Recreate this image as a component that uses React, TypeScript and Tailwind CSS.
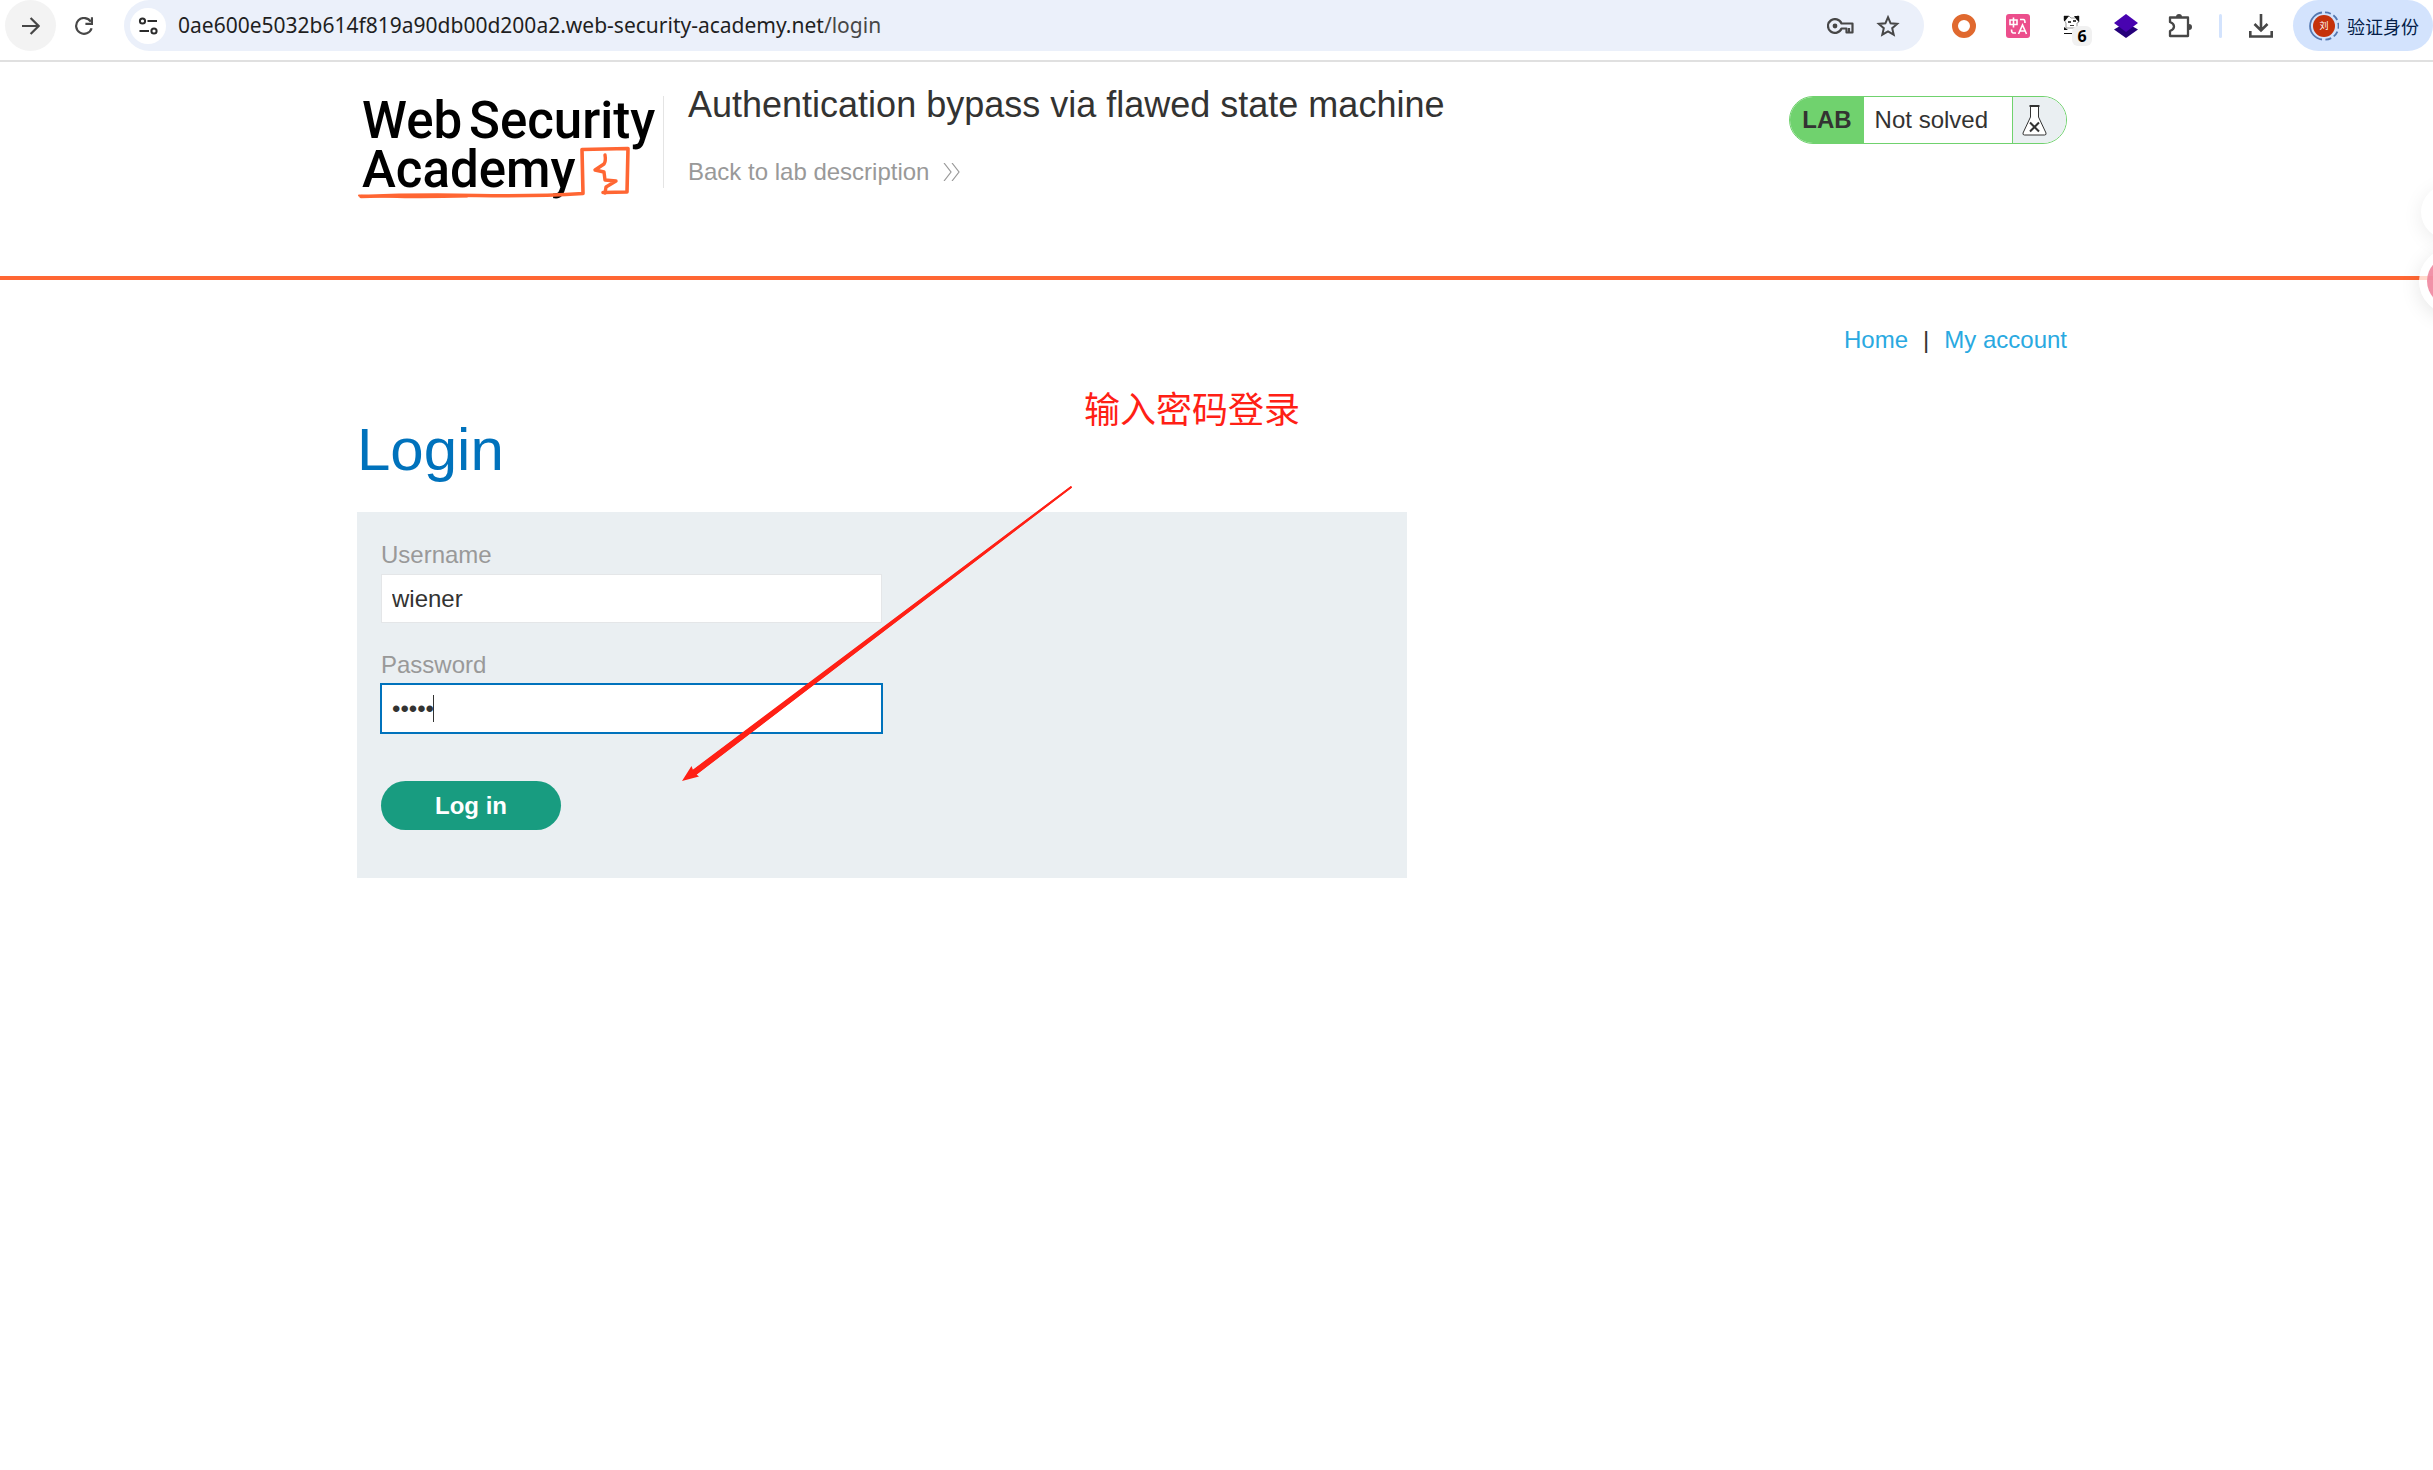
import type { ReactNode } from 'react';

const host = '0ae600e5032b614f819a90db00d200a2.web-security-academy.net';

export default function App() {
  return (
    <div className="relative min-h-screen overflow-hidden bg-white font-['Liberation_Sans',Arial,sans-serif] text-2xl leading-7 text-[#333332]">
      <BrowserBar />
      <LabHeader />
      <div className="pr-[9px]">
        <main className="relative mx-auto max-w-[1710px] pt-[46px]">
          <nav className="flex justify-end gap-[15px]">
            <a href="#home" className="text-[#29a9e1]">Home</a>
            <span>|</span>
            <a href="#account" className="text-[#29a9e1]">My account</a>
          </nav>
          <h1 className="mt-16 text-[60px] leading-[64px] text-[#0072bc]">Login</h1>
          <LoginForm />
          <Annotation />
        </main>
      </div>
      <FloatingButtons />
    </div>
  );
}

function BrowserBar() {
  return (
    <div className="h-[62px] border-b-2 border-[#e0e0e0]">
      <div className="flex h-[51px] items-center pl-[5px]">
        <button aria-label="Forward" className="grid size-[51px] shrink-0 place-items-center rounded-full bg-[#f3f3f3]">
          <svg viewBox="0 0 18 18" className="size-[18px]" fill="none" stroke="#474747" strokeWidth="2.2">
            <path d="M0 9h16.4M8.6 1l8 8-8 8" />
          </svg>
        </button>
        <button aria-label="Reload" className="ml-[19px] grid size-[18px] shrink-0 place-items-center">
          <svg viewBox="0 0 18 18" className="size-[18px]" fill="none" stroke="#474747" strokeWidth="2.2">
            <path d="M16.6 11.2A7.9 7.9 0 1 1 15.8 4.8" />
            <path d="M17 .2v6.7h-6.6" />
          </svg>
        </button>

        <div className="ml-[31px] flex h-[51px] min-w-0 flex-1 items-center rounded-full bg-[#ebf0fa] pr-6 pl-1.5">
          <button aria-label="Site information" className="grid size-9 shrink-0 place-items-center rounded-full bg-white">
            <svg viewBox="0 0 20 18" className="h-[18px] w-5" fill="none" stroke="#2b2b2b" strokeWidth="2">
              <circle cx="4.5" cy="4" r="2.6" />
              <circle cx="16" cy="14" r="2.6" />
              <path d="M9.5 4H19M1.5 14H11" />
            </svg>
          </button>
          <div className="ml-3 flex-1 pb-0.5 font-['Noto_Sans',sans-serif] text-[21px] text-[#1f1f1f]">
            {host}<span className="text-[#474747]">/login</span>
          </div>
          <button aria-label="Passwords" className="mr-[22px]">
            <svg viewBox="0 0 27 16" className="h-4 w-[27px]" fill="none" stroke="#474747" strokeWidth="2.2">
              <path d="M14.5 5.5A7 6.9 0 1 0 14.5 10.5H19.500V14.500H25.500V5.500Z" strokeLinejoin="round" />
              <circle cx="8" cy="8" r="2.400" fill="#474747" stroke="none" />
              <path d="M22 14v-4" />
            </svg>
          </button>
          <button aria-label="Bookmark this tab">
            <svg viewBox="0 0 24 24" className="h-6 w-6" fill="none" stroke="#474747" strokeWidth="2">
              <path d="M12 3.200l2.600 6.100 6.600.600-5 4.300 1.500 6.500-5.700-3.400-5.700 3.400 1.500-6.500-5-4.300 6.600-.600z" />
            </svg>
          </button>
        </div>

        <div className="ml-7 flex shrink-0 items-center gap-[30px]">
          <Extension label="Proxy switch">
            <circle cx="12" cy="12" r="9" fill="#fff" stroke="#e0692f" strokeWidth="6" />
          </Extension>
          <Extension label="Translate">
            <rect width="24" height="24" rx="3" fill="#ec4e8c" />
            <g fill="none" stroke="#fff" strokeWidth="1.600">
              <path d="M4 6h7v4.500H4zM7.500 3.500v10M14 5.500h3.500q1.500 0 1.500 3.500M5.500 15.500q0 3.500 2 3.500H10" />
              <path d="M12.500 20l4-9 4 9M14 17h5" />
            </g>
          </Extension>
          <span className="relative">
            <Extension label="Panda">
              <path d="M4 2h5l2 2h4l2-2h2v6l-2 1v5H6V9L4 6z" fill="#fff" stroke="#999" strokeWidth="1" />
              <path d="M4 2h5L5 7H4zM14 2h5v6l-3-3zM4 13l4 3H4zM4 19h8v1H4z" fill="#111" />
              <path d="M8 7h3v2H8zM13 6h3v2h-3zM10 11h4v1h-4z" fill="#444" />
            </Extension>
            <span className="absolute top-3 left-3 grid size-5 place-items-center rounded-md bg-[#f1f1f1] font-['Noto_Sans',sans-serif] text-base leading-5 font-bold text-black">6</span>
          </span>
          <Extension label="Layers">
            <path d="M0 15.500l12-7 12 7-12 8.500z" fill="#25007a" />
            <path d="M0 9l12-9 12 9-12 9z" fill="#4803b0" />
          </Extension>
          <Extension label="Extensions">
            <path d="M2 3.500h18v18.500H2v-5q4-1.500 4-4.500t-4-4.500z" fill="none" stroke="#474747" strokeWidth="2.300" strokeLinejoin="round" />
            <path d="M8 3a3 3 0 0 1 6 0zM21 10a3 3 0 0 1 0 6z" fill="#474747" />
          </Extension>
        </div>
        <span className="ml-[27px] h-6 w-[3px] shrink-0 rounded-full bg-[#d3e3fd]" />
        <button aria-label="Downloads" className="ml-[27px] shrink-0">
          <svg viewBox="0 0 24 24" className="size-6" fill="none" stroke="#474747" strokeWidth="2.600">
            <path d="M12 0v16M5.500 10l6.500 6.500L18.500 10M1.300 17v5.500h21.400V17" />
          </svg>
        </button>
        <button className="ml-5 flex h-[51px] w-[140px] shrink-0 items-center gap-2 rounded-full bg-[#d3e3fd] pl-4 text-lg text-[#041e49]">
          <span className="relative grid size-[30px] shrink-0 place-items-center">
            <svg viewBox="0 0 30 30" className="absolute inset-0 size-[30px]" fill="none">
              <path d="M13 1.500A13.600 13.600 0 0 0 13 28.500" stroke="#5478b0" strokeWidth="1.800" />
              <path d="M16 1.400A13.600 13.600 0 0 1 16 28.600" stroke="#5478b0" strokeWidth="1.800" strokeDasharray="6 3" />
              <circle cx="15" cy="15" r="11" fill="#c5320b" />
            </svg>
            <span className="relative font-['Noto_Sans_CJK_SC',sans-serif] text-[9px] leading-3 text-white">刘</span>
          </span>
          <span className="font-['Noto_Sans_CJK_SC',sans-serif] whitespace-nowrap">验证身份</span>
        </button>
      </div>
    </div>
  );
}

function Extension({ label, children }: { label: string; children: ReactNode }) {
  return (
    <button aria-label={label} className="block size-6">
      <svg viewBox="0 0 24 24" className="size-6">{children}</svg>
    </button>
  );
}

function LabHeader() {
  return (
    <header className="h-[218px] border-b-4 border-[#ff6633] pr-[9px]">
      <div className="mx-auto flex max-w-[1710px] items-start pt-[22px]">
        <a href="#academy" aria-label="Web Security Academy" className="mt-3 flex border-r border-[#e4e4e4]">
          <AcademyLogo />
        </a>
        <div className="ml-6 flex-1">
          <h2 className="text-4xl leading-[42px]">Authentication bypass via flawed state machine</h2>
          <a href="#lab" className="mt-8 flex items-center gap-3.5 text-[#999]">
            Back to lab description
            <svg viewBox="0 0 18 18" className="size-[18px]" fill="none" stroke="#999" strokeWidth="1.200">
              <path d="M1 0l7 9-7 9M9 0l7 9-7 9" />
            </svg>
          </a>
        </div>
        <div className="mt-3 flex h-12 overflow-hidden rounded-full border border-[#70d26e] bg-white">
          <span className="flex items-center bg-[#70d26e] px-3 font-bold">LAB</span>
          <span className="flex items-center pr-6 pl-[11px]">Not solved</span>
          <span className="flex w-[54px] items-center border-l border-[#70d26e] bg-[#eaeff2] pl-[9px]">
            <svg viewBox="0 0 25 31" className="h-[31px] w-[25px]" fill="#fff" stroke="#333" strokeWidth="1">
              <path d="M8.500 1.500v10.500L1 28q-.500 2 1.500 2h20q2 0 1.500-2L16.500 12V1.500z" />
              <path d="M7.500 1h10" strokeWidth="1.800" />
              <path d="M8 17.500l9 9M17 17.500l-9 9" strokeWidth="2" />
            </svg>
          </span>
        </div>
      </div>
    </header>
  );
}

function AcademyLogo() {
  return (
    <svg viewBox="0 0 306 92" className="h-[92px] w-[306px] overflow-visible">
      <g className="font-[Roboto,sans-serif] text-[51px] font-medium" fill="#000">
        <text x="5" y="42">Web</text>
        <text x="112" y="42">Security</text>
        <text x="5" y="91">Academy</text>
      </g>
      <g fill="none" stroke="#ff6633" strokeLinejoin="round" strokeLinecap="round">
        <path d="M4 100.500Q60 98.500 120 99.500T226 97.500L225 53.500L271 52.500L270 96L246 96.500" strokeWidth="3.600" />
        <path d="M2 99.500Q50 102.500 110 100.500" strokeWidth="2" />
        <path d="M248 59q1 6-1 9l-9 6 9 2 1 8 11 1-10 6-1 6" strokeWidth="3.400" />
      </g>
    </svg>
  );
}

function LoginForm() {
  return (
    <form className="mt-[30px] flex max-w-[1050px] flex-col items-start bg-[#eaeff2] px-6 pt-[29px] pb-12">
      <label htmlFor="username" className="text-[#999]">Username</label>
      <input
        id="username"
        defaultValue="wiener"
        className="mt-[5px] h-[49px] w-full max-w-[501px] border border-[#e4e6e8] bg-white px-2.5 outline-none"
      />
      <label htmlFor="password" className="mt-7 text-[#999]">Password</label>
      <div className="relative mt-[5px] w-full max-w-[501px]">
        <input
          id="password"
          type="password"
          defaultValue="peter"
          className="block h-[49px] w-full border border-[#0072bc] bg-white px-2.5 ring-1 ring-[#0072bc] outline-none"
        />
        {/* caret */}
        <span className="absolute top-[11px] left-[52px] h-[27px] w-px bg-[#333332]" />
      </div>
      <button type="button" className="mt-12 h-[49px] w-[180px] rounded-full bg-[#189c80] font-bold text-white">Log in</button>
    </form>
  );
}

function Annotation() {
  return (
    <>
      <p className="absolute top-[101px] left-[727px] font-['Noto_Sans_CJK_SC',sans-serif] text-4xl leading-[52px] whitespace-nowrap text-[#ff2015]">
        输入密码登录
      </p>
      <svg viewBox="0 0 390 297" className="pointer-events-none absolute top-[206px] left-[325px] h-[297px] w-[390px]" fill="#ff2015">
        <path d="M389 0L390 1.500L14.500 288.500L17 290.500L0 295L9.500 280L11 284Z" />
        <path d="M389 0L390 1.500L14 289L10.500 284Z" />
      </svg>
    </>
  );
}

// side widget buttons peeking in from the right edge
function FloatingButtons() {
  return (
    <>
      <span className="absolute top-[185px] -right-[42px] size-[54px] rounded-full bg-white shadow-[0_4px_20px_rgba(0,0,0,0.08)]" />
      <span className="absolute top-[248px] -right-[52px] grid size-[66px] place-items-center rounded-full bg-white/75 shadow-[0_4px_20px_rgba(0,0,0,0.1)]">
        <span className="size-[50px] rounded-full bg-[#ee7f99]/85" />
      </span>
    </>
  );
}
